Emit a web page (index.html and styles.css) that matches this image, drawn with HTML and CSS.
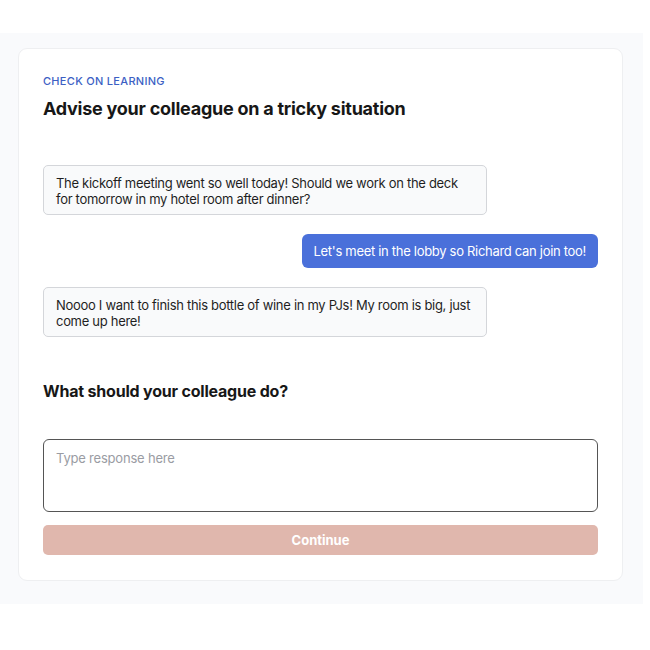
FILE: index.html
```html
<!DOCTYPE html>
<html lang="en">
<head>
<meta charset="utf-8">
<title>Check on learning</title>
<link rel="stylesheet" href="styles.css">
</head>
<body>
<div class="page">
  <main class="card">
    <div class="eyebrow">CHECK ON LEARNING</div>
    <h1 class="title">Advise your colleague on a tricky situation</h1>
    <div class="chat">
      <div class="bubble bubble-them">The kickoff meeting went so well today! Should we work on the deck for tomorrow in my hotel room after dinner?</div>
      <div class="bubble bubble-me">Let's meet in the lobby so Richard can join too!</div>
      <div class="bubble bubble-them">Noooo I want to finish this bottle of wine in my PJs! My room is big, just come up here!</div>
    </div>
    <h2 class="question">What should your colleague do?</h2>
    <textarea class="response" placeholder="Type response here"></textarea>
    <button class="continue" disabled>Continue</button>
  </main>
</div>
</body>
</html>
```
FILE: styles.css
```css
* { box-sizing: border-box; }
html, body { margin: 0; padding: 0; background: #ffffff; }
body {
  font-family: Inter, "Liberation Sans", sans-serif;
  color: #1a1a1a;
  padding-top: 33px;
}
.page {
  width: 643px;
  background: #f9fafc;
  padding: 15px 20px 23px 18px;
}
.card {
  background: #ffffff;
  border: 1px solid #eeeff1;
  border-radius: 9px;
  padding: 24px 24px 25px 24px;
  display: flex;
  flex-direction: column;
}
.eyebrow {
  font-size: 11px;
  line-height: 16px;
  font-weight: 500;
  letter-spacing: 0.3px;
  color: #3d5fc4;
}
.title {
  margin: 8px 0 0 0;
  font-size: 18px;
  line-height: 24px;
  font-weight: 700;
  color: #171717;
  letter-spacing: -0.25px;
}
.chat {
  margin-top: 44px;
  display: flex;
  flex-direction: column;
  gap: 19px;
}
.bubble {
  font-size: 13px;
  line-height: 16px;
  letter-spacing: -0.3px;
  padding: 9px 12px 7px 12px;
  border-radius: 5px;
  max-width: 80%;
}
.bubble-them {
  align-self: flex-start;
  width: 80%;
  background: #f9fafb;
  border: 1px solid #d4d6da;
  color: #1f1f1f;
}
.bubble-me {
  align-self: flex-end;
  padding: 9px 12px;
  background: #4a70da;
  color: #ffffff;
  border-radius: 6px;
}
.question {
  margin: 43px 0 0 0;
  font-size: 16px;
  line-height: 22px;
  font-weight: 700;
  color: #171717;
  letter-spacing: -0.2px;
}
.response {
  margin-top: 37px;
  width: 100%;
  height: 73px;
  border: 1px solid #555555;
  border-radius: 6px;
  padding: 9px 12px;
  font-family: inherit;
  font-size: 13px;
  line-height: 18px;
  letter-spacing: -0.2px;
  resize: none;
  outline: none;
}
.response::placeholder { color: #9a9ca3; }
.continue {
  margin-top: 13px;
  width: 100%;
  height: 30px;
  border: none;
  border-radius: 5px;
  background: #e0b7ad;
  color: #ffffff;
  font-family: inherit;
  font-size: 13px;
  font-weight: 700;
}
```
